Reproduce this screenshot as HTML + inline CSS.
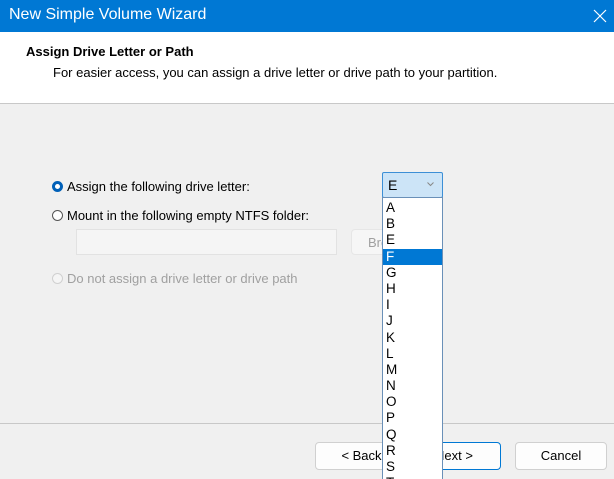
<!DOCTYPE html>
<html style="width:614px;height:479px;overflow:hidden"><head><meta charset="utf-8"><style>
*{margin:0;padding:0;box-sizing:border-box}
body{width:614px;height:479px;overflow:hidden;background:#f0f0f0;font-family:"Liberation Sans",sans-serif;font-size:13px;color:#000;position:relative}
.a{position:absolute;white-space:nowrap}
.tb{left:0;top:0;width:614px;height:32px;background:#0078d4;color:#fff;font-size:16px;line-height:30px;padding-left:9px}
.hd{left:0;top:32px;width:614px;height:72px;background:#fff;border-bottom:1px solid #c8c8c8}
.btn{background:#fdfdfd;border:1px solid #d0d0d0;border-radius:4px;height:28px;line-height:26px;text-align:center;font-size:13px}
.rad{width:11px;height:11px;border-radius:50%;border:1px solid #555;background:#fff}
.list div{height:16.2px;line-height:16.2px;padding-left:3px;font-size:13.5px}
</style></head><body>
<div class="a tb">New Simple Volume Wizard</div>
<svg class="a" style="left:503px;top:8px;left:504px" width="0" height="0"></svg>
<svg class="a" style="left:504px;top:0" width="0" height="0"></svg>
<svg class="a" style="left:503px;top:0" width="0" height="0"></svg>
<svg class="a" style="left:0;top:0" width="614" height="32"><path d="M503 8L516 21M516 8L503 21" stroke="none"/><path d="M504 0" /><path d="M0 0"/></svg>
<svg class="a" style="left:504px;top:0" width="0" height="0"></svg>
<svg class="a" style="left:593px;top:9px" width="14" height="14"><path d="M1 1L13 13M13 1L1 13" stroke="#fff" stroke-width="1.2"/></svg>
<div class="a hd"></div>
<div class="a" style="left:26px;top:44px;font-weight:bold">Assign Drive Letter or Path</div>
<div class="a" style="left:53px;top:65px">For easier access, you can assign a drive letter or drive path to your partition.</div>
<div class="a" style="left:0;top:423px;width:614px;height:1px;background:#c8c8c8"></div>

<div class="a rad" style="left:52px;top:181px;border:3px solid #0060b8"></div>
<div class="a" style="left:67px;top:179px">Assign the following drive letter:</div>
<div class="a rad" style="left:52px;top:210px"></div>
<div class="a" style="left:67px;top:208px">Mount in the following empty NTFS folder:</div>
<div class="a" style="left:76px;top:229px;width:261px;height:26px;background:#f5f5f5;border:1px solid #e2e2e2"></div>
<div class="a btn" style="left:351px;top:229px;width:80px;height:26px;color:#a0a0a0;text-align:left;padding-left:16px;border-color:#e6e6e6;background:#f6f6f6">Browse...</div>
<div class="a rad" style="left:52px;top:273px;border-color:#d0d0d0;background:#f5f5f5"></div>
<div class="a" style="left:67px;top:271px;color:#a0a0a0">Do not assign a drive letter or drive path</div>

<div class="a btn" style="left:315px;top:442px;width:93px">&lt; Back</div>
<div class="a btn" style="left:407px;top:442px;width:94px;border-color:#0078d4">Next &gt;</div>
<div class="a btn" style="left:515px;top:442px;width:92px">Cancel</div>

<div class="a" style="left:382px;top:172px;width:61px;height:26px;background:#cce4f7;border:1px solid #3c8fd6;border-radius:2px;padding-left:5px;line-height:24px;font-size:14px">E</div>
<svg class="a" style="left:427px;top:182px" width="7" height="5"><path d="M0.5 0.5L3.5 3.5L6.5 0.5" stroke="#888" fill="none"/></svg>
<div class="a list" style="left:382px;top:197px;width:61px;height:282px;overflow:hidden;background:#fff;border:1px solid #6a90b8;border-bottom:none;padding-top:2px">
<div>A</div><div>B</div><div>E</div><div style="background:#0078d4;color:#fff">F</div><div>G</div><div>H</div><div>I</div><div>J</div><div>K</div><div>L</div><div>M</div><div>N</div><div>O</div><div>P</div><div>Q</div><div>R</div><div>S</div><div>T</div>
</div>
</body></html>
